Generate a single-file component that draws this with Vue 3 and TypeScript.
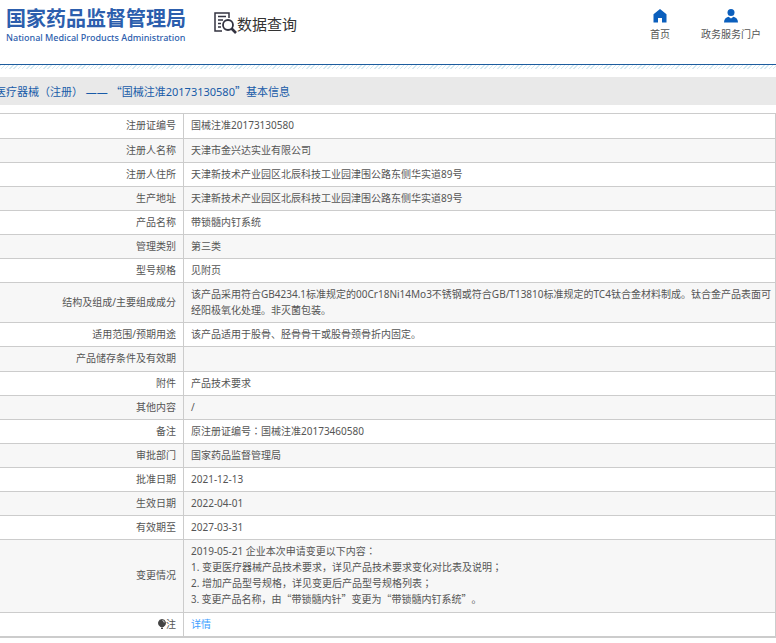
<script setup lang="ts">
interface Row {
  label: string
  lines: string[]
  roomy?: boolean
  link?: boolean
}

const rows: Row[] = [
  { label: '注册证编号', lines: ['国械注准20173130580'], roomy: true },
  { label: '注册人名称', lines: ['天津市金兴达实业有限公司'] },
  { label: '注册人住所', lines: ['天津新技术产业园区北辰科技工业园津围公路东侧华实道89号'] },
  { label: '生产地址', lines: ['天津新技术产业园区北辰科技工业园津围公路东侧华实道89号'] },
  { label: '产品名称', lines: ['带锁髓内钉系统'] },
  { label: '管理类别', lines: ['第三类'] },
  { label: '型号规格', lines: ['见附页'] },
  {
    label: '结构及组成/主要组成成分',
    lines: [
      '该产品采用符合GB4234.1标准规定的00Cr18Ni14Mo3不锈钢或符合GB/T13810标准规定的TC4钛合金材料制成。钛合金产品表面可经阳极氧化处理。非灭菌包装。',
    ],
  },
  { label: '适用范围/预期用途', lines: ['该产品适用于股骨、胫骨骨干或股骨颈骨折内固定。'] },
  { label: '产品储存条件及有效期', lines: [''], roomy: true },
  { label: '附件', lines: ['产品技术要求'] },
  { label: '其他内容', lines: ['/'] },
  { label: '备注', lines: ['原注册证编号：国械注准20173460580'] },
  { label: '审批部门', lines: ['国家药品监督管理局'] },
  { label: '批准日期', lines: ['2021-12-13'] },
  { label: '生效日期', lines: ['2022-04-01'] },
  { label: '有效期至', lines: ['2027-03-31'] },
  {
    label: '变更情况',
    lines: [
      '2019-05-21 企业本次申请变更以下内容：',
      '1. 变更医疗器械产品技术要求，详见产品技术要求变化对比表及说明；',
      '2. 增加产品型号规格，详见变更后产品型号规格列表；',
      '3. 变更产品名称，由“带锁髓内针”变更为“带锁髓内钉系统”。',
    ],
    roomy: true,
  },
  { label: '注', lines: ['详情'], link: true },
]

// Splits a line so that centred punctuation can take its own font.
const pieces = (line: string): string[] => line.split(/([：；])/)
const isMark = (piece: string): boolean => /^[：；]$/.test(piece)
</script>

<template>
  <div class="page" lang="zh-CN">
    <header class="header">
      <a class="brand" href="#">
        <span class="brand-cn">国家药品监督管理局</span>
        <span class="brand-en">National Medical Products Administration</span>
      </a>
      <a class="query" href="#">
        <svg width="23" height="23" viewBox="0 0 23 23" fill="none" stroke="#333340" aria-hidden="true">
          <path d="M15 6V1H1v18h7" stroke-width="1.5" />
          <path d="M4 4.5h8M4 8h5M4 11.5h3M4 15h3" stroke-width="1.3" />
          <circle cx="14" cy="13" r="5" stroke-width="1.8" />
          <path d="M17.5 16.5l4.5 4.5" stroke-width="2.6" />
        </svg>
        <span>数据查询</span>
      </a>
      <nav class="nav">
        <a href="#">
          <svg width="14" height="14" viewBox="0 0 14 14" fill="#0b5fbd" aria-hidden="true">
            <path d="M7 0L.5 5.3V13.5H5V9h4v4.5h4.500V5.300z" />
          </svg>
          <span>首页</span>
        </a>
        <a href="#">
          <svg width="14" height="14" viewBox="0 0 14 14" fill="#0b5fbd" aria-hidden="true">
            <circle cx="7" cy="3.500" r="3.500" />
            <path d="M0 13.500C0 10 2 8.200 4.500 7.700L7 9.500l2.500-1.800C12 8.200 14 10 14 13.500z" />
          </svg>
          <span>政务服务门户</span>
        </a>
      </nav>
    </header>
    <div class="hatch"></div>

    <main>
      <h1 class="title">
        <span>医疗器械（注册） —— <span class="cjk">“</span>国械注准20173130580<span class="cjk">”</span>基本信息</span>
      </h1>
      <table class="info">
        <tbody>
          <tr v-for="row in rows" :key="row.label" :class="{ roomy: row.roomy }">
            <th scope="row">
              <svg v-if="row.link" class="bulb" width="8" height="10" viewBox="0 0 8 10" aria-hidden="true">
                <path d="M4 0a4 4 0 0 1 2.300 7.200L5.500 8h-3l-.8-.8A4 4 0 0 1 4 0zM3 8.500h2V10H3z" fill="#444" />
                <path d="M4.500 1.500a2 2 0 0 1 1.700 2" fill="none" stroke="#ddd" />
              </svg>{{ row.label }}
            </th>
            <td>
              <a v-if="row.link" href="#">{{ row.lines[0] }}</a>
              <template v-else>
                <p v-for="line in row.lines" :key="line" :class="{ cjk: line.includes('“') }">
                  <template v-for="(piece, i) in pieces(line)" :key="i"><span v-if="isMark(piece)" class="mark" lang="zh-TW">{{ piece }}</span><template v-else>{{ piece }}</template></template>
                </p>
              </template>
            </td>
          </tr>
        </tbody>
      </table>
    </main>
  </div>
</template>

<style>
body {
  margin: 0;
  background: #fff;
}
</style>

<style scoped>
.page {
  overflow: hidden;
  color: #555;
  font-family: "Noto Sans", "Noto Sans CJK SC", sans-serif;
  font-size: 10px;
  line-height: 16px;
  text-spacing-trim: space-all;
}

a {
  color: inherit;
  text-decoration: none;
}

.cjk {
  font-family: "Noto Sans CJK SC", sans-serif;
}

.mark {
  font-family: "Noto Sans CJK TC", sans-serif;
}

.header {
  display: flex;
  align-items: flex-start;
  height: 64px;
  padding: 0 15px 0 6px;
  border-bottom: 1px solid #1d5c9e;
}

.brand {
  display: flex;
  flex-direction: column;
  padding-top: 7px;
  color: #2c5ead;
  white-space: nowrap;
}

.brand-cn {
  font-size: 20px;
  font-weight: 700;
  line-height: 24px;
}

.brand-en {
  font-size: 9px;
  font-weight: 500;
  line-height: 14px;
}

.query {
  display: flex;
  align-items: center;
  padding: 12px 0 0 28px;
  color: #333;
  font-size: 15px;
  line-height: 22px;
}

.nav {
  display: flex;
  gap: 31px;
  margin-left: auto;
  padding-top: 9px;
}

.nav a {
  display: flex;
  flex-direction: column;
  align-items: center;
  gap: 3px;
}

.hatch {
  height: 4px;
  margin-bottom: 8px;
  background: repeating-linear-gradient(135deg, #d5eaf2 0 1px, #fff 1px 3px);
}

.title {
  display: flex;
  align-items: center;
  height: 28px;
  margin: 0 0 8px;
  background: #e9e9e9;
  color: #185ba8;
  font-size: 11px;
  font-weight: 400;
  white-space: nowrap;
}

.title > span {
  margin-left: -5px;
}

.info {
  width: 100%;
  border-collapse: collapse;
  table-layout: fixed;
  border-right: 1px solid #ccc;
  border-bottom: 2px solid #ccc;
}

.info th,
.info td {
  padding: 3px 4px 4px 7px;
  border-top: 1px solid #ccc;
  font-weight: 400;
  vertical-align: middle;
}

.info th {
  width: 169px;
  padding-right: 7px;
  border-right: 1px solid #ccc;
  text-align: right;
}

.info td {
  height: 16px;
}

.info .roomy th,
.info .roomy td {
  padding-bottom: 5px;
}

.info tr:nth-child(even) {
  background: #f7f7f7;
}

.info p {
  margin: 0;
}

.info td a {
  color: #409eff;
}

.bulb {
  vertical-align: -1px;
}
</style>
